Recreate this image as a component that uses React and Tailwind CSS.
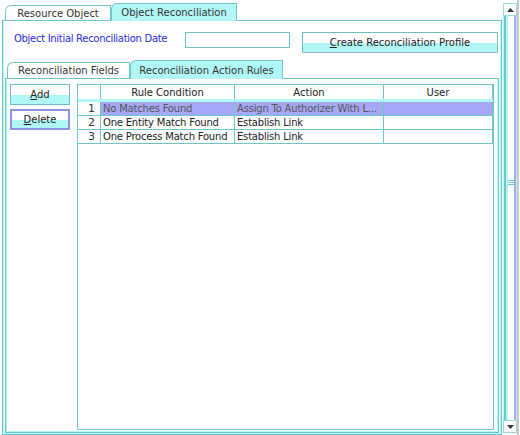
import React from "react";

const rows = [
  { n: 1, cond: "No Matches Found", action: "Assign To Authorizer With L...", user: "", selected: true },
  { n: 2, cond: "One Entity Match Found", action: "Establish Link", user: "" },
  { n: 3, cond: "One Process Match Found", action: "Establish Link", user: "" },
];

const btn =
  "border border-[#6fbfbf] bg-[linear-gradient(to_bottom,#ffffff_55%,#b2f7f7_55%)] text-[#222] flex items-center justify-center";

export default function App() {
  return (
    <div className="w-[520px] h-[435px] bg-white flex overflow-hidden text-[10px] font-['DejaVu_Sans',sans-serif] text-[#222]">
      {/* Outer tabbed pane */}
      <div className="w-[502px] pl-[2px] pt-[3px] flex flex-col">
        <div className="h-[17px] flex items-end pl-[3px]">
          <div className="w-[106px] h-[15px] border border-b-0 border-[#6fc6c6] rounded-tl-[6px] flex items-center justify-center text-[#333]">
            Resource Object
          </div>
          <div className="relative z-10 -mb-px w-[126px] h-[18px] bg-[#b2f7f7] border border-b-0 border-[#6fc6c6] rounded-tl-[6px] flex items-center justify-center text-[#333]">
            Object Reconciliation
          </div>
        </div>
        <div className="flex-1 border border-[#6fc6c6]">
          <div className="h-full border border-[#b2f7f7] border-t-white flex flex-col">
            {/* Date row */}
            <div className="flex items-start pl-[10px] pt-[10px]">
              <div className="w-[171px] mt-[1px] leading-[12px] tracking-[-0.3px] text-[#2a2ae8]">Object Initial Reconciliation Date</div>
              <div className="w-[105px] h-[16px] border border-[#6fc6c6] bg-white" />
              <div className={`${btn} ml-[12px] w-[196px] h-[21px] border-b-[#8fb8c8]`}>
                <span><span className="underline">C</span>reate Reconciliation Profile</span>
              </div>
            </div>

            {/* Inner tabbed pane */}
            <div className="flex-1 flex flex-col mt-[7px] ml-px mr-px">
              <div className="h-[18px] flex items-end pl-[2px]">
                <div className="w-[123px] h-[16px] border border-b-0 border-[#6fc6c6] rounded-tl-[6px] flex items-center justify-center text-[#333]">
                  Reconciliation Fields
                </div>
                <div className="relative z-10 -mb-px w-[153px] h-[19px] bg-[#b2f7f7] border border-b-0 border-[#6fc6c6] rounded-tl-[6px] flex items-center justify-center text-[#333]">
                  Reconciliation Action Rules
                </div>
              </div>
              <div className="flex-1 border border-[#6fc6c6]">
                <div className="h-full border border-[#b2f7f7] border-t-white flex pl-[3px] pt-[4px] pr-[3px] pb-px gap-[7px]">
                  {/* Buttons */}
                  <div className="w-[60px] flex flex-col gap-[4px]">
                    <div className={`${btn} h-[21px]`}>
                      <span><span className="underline">A</span>dd</span>
                    </div>
                    <div className="h-[21px] border-2 border-[#8f93e6] bg-[linear-gradient(to_bottom,#ffffff_55%,#b2f7f7_55%)] flex items-center justify-center">
                      <span><span className="underline">D</span>elete</span>
                    </div>
                  </div>

                  {/* Table */}
                  <div className="flex-1 border border-[#6fc6c6] bg-white">
                    <div className="flex h-[17px] border-b-[3px] border-[#b2f7f7]">
                      <div className="w-[23px] border-r border-[#6fc6c6]" />
                      <div className="w-[134px] border-r border-[#6fc6c6] flex items-center justify-center">Rule Condition</div>
                      <div className="w-[149px] border-r border-[#6fc6c6] flex items-center justify-center">Action</div>
                      <div className="flex-1 border-r border-[#6fc6c6] flex items-center justify-center">User</div>
                    </div>
                    {rows.map((r) => (
                      <div key={r.n} className="flex h-[14px] border-b border-[#6fc6c6]">
                        <div className="w-[23px] border-r border-[#6fc6c6] text-right pr-[5px] text-[11px] leading-[14px] text-[#333]">{r.n}</div>
                        <div className={`w-[134px] border-r border-[#6fc6c6] pl-[2px] leading-[14px] tracking-[-0.2px] ${r.selected ? "bg-[#a7a7f7] text-[#555]" : ""}`}>{r.cond}</div>
                        <div className={`w-[149px] border-r border-[#6fc6c6] pl-[2px] leading-[14px] tracking-[-0.2px] whitespace-nowrap overflow-hidden ${r.selected ? "bg-[#a7a7f7] text-[#555]" : ""}`}>{r.action}</div>
                        <div className={`flex-1 border-r border-[#6fc6c6] ${r.selected ? "bg-[#a7a7f7]" : ""}`}>{r.user}</div>
                      </div>
                    ))}
                  </div>
                </div>
              </div>
            </div>
          </div>
        </div>
      </div>

      {/* Vertical scrollbar */}
      <div className="w-[16px] ml-px pt-[3px] pb-[2px] flex flex-col border-r-2 border-[#c8c8c8]">
        <div className="h-[13px] border border-[#9fd8d8] bg-white flex items-center justify-center">
          <svg width="7" height="4" viewBox="0 0 7 4"><path d="M0 4 L3.5 0 L7 4 Z" fill="#333" /></svg>
        </div>
        <div className="flex-1 flex border-x border-[#b2f7f7] relative">
          <div className="flex-1 border-l-2 border-[#6fc6c6] border-r-2 border-r-[#a7a7f7] bg-white bg-[linear-gradient(to_right,#b2f7f7_0_2px,#fff_2px)]" />
          <div className="absolute left-[4px] top-[164px] w-[7px] flex flex-col gap-px">
            <div className="h-px bg-[#6fc6c6]" />
            <div className="h-px bg-[#6fc6c6]" />
            <div className="h-px bg-[#6fc6c6]" />
          </div>
        </div>
        <div className="h-[13px] border border-[#9fd8d8] bg-white flex items-center justify-center">
          <svg width="7" height="4" viewBox="0 0 7 4"><path d="M0 0 L3.5 4 L7 0 Z" fill="#333" /></svg>
        </div>
      </div>
    </div>
  );
}
